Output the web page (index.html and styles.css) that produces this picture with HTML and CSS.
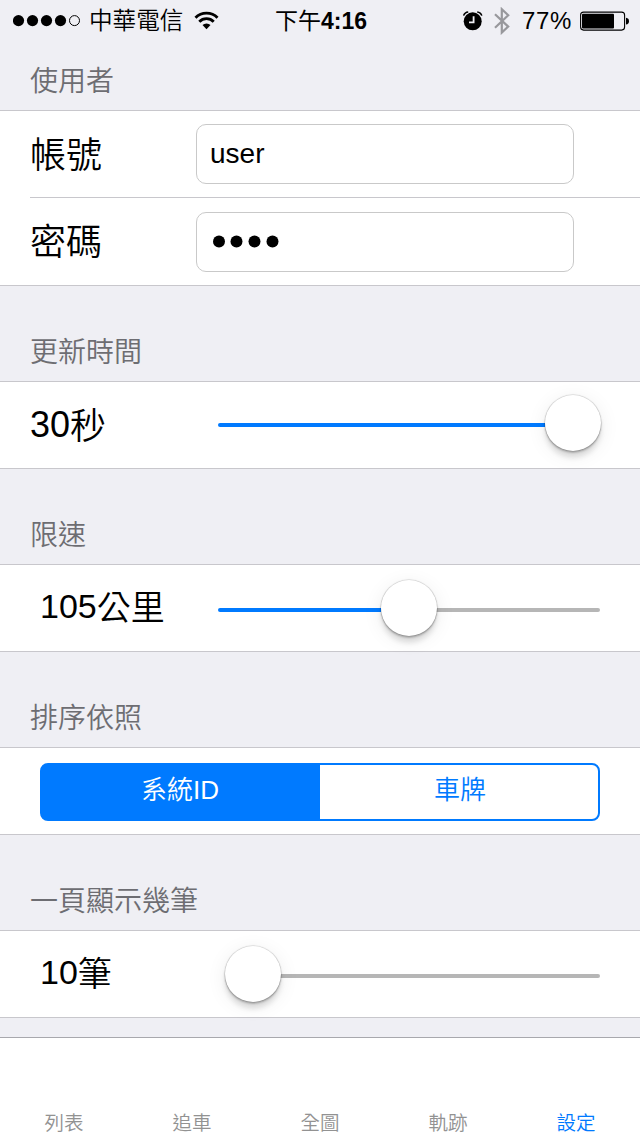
FILE: index.html
```html
<!DOCTYPE html>
<html lang="zh-Hant">
<head>
<meta charset="utf-8">
<title>設定</title>
<link rel="stylesheet" href="styles.css">
</head>
<body>
<div class="screen">
  <header class="status">
    <div class="status-left">
      <svg class="signal" width="68" height="12" viewBox="0 0 68 12"><circle cx="5.5" cy="5.6" r="5.6"/><circle cx="19.5" cy="5.6" r="5.6"/><circle cx="33.5" cy="5.6" r="5.6"/><circle cx="47.5" cy="5.6" r="5.6"/><circle cx="61.5" cy="5.6" r="5" fill="none" stroke="#000"/></svg>
      <span class="carrier">中華電信</span>
      <svg class="wifi" width="25" height="19" viewBox="0 0 26 20"><g fill="none" stroke="#000" stroke-width="3"><path d="M1.4 7.1a16.2 16.2 0 0 1 23.2 0"/><path d="M5.4 11.3a10.6 10.6 0 0 1 15.2 0"/></g><path d="M8.8 14.8a5.9 5.9 0 0 1 8.4 0L13 19.2z"/></svg>
    </div>
    <div class="time">下午<b>4:16</b></div>
    <div class="status-right">
      <svg class="alarm" width="20" height="20" viewBox="0 0 20 20"><circle cx="9.7" cy="10.3" r="9"/><path d="M10.6 5.2v6.2H6" fill="none" stroke="#efeff4" stroke-width="1.8"/><path d="M.6 4.6Q1.6 1.2 5.2 .9M18.8 4.6Q17.8 1.2 14.2 .9" fill="none" stroke="#000" stroke-width="1.5"/></svg>
      <svg class="bluetooth" width="16" height="28" viewBox="0 0 16 28"><path d="M1 7.2l13.2 12.4-6.4 6V2.2l6.4 6L1 20.8" fill="none" stroke="#98989c" stroke-width="2.2"/></svg>
      <span class="percent">77%</span>
      <svg class="battery" width="49" height="20" viewBox="0 0 49 20"><rect x=".6" y="1.1" width="44" height="18" rx="3" fill="none" stroke="#000" stroke-width="1.1"/><rect x="2" y="2.7" width="32" height="14.8" rx="1"/><path d="M46 6.8q3 .5 3 3.4t-3 3.4z"/></svg>
    </div>
  </header>

  <h2 class="heading heading-first">使用者</h2>
  <section class="group">
    <div class="row row-account"><label class="label"><span class="cjk">帳號</span></label><div class="field">user</div></div>
    <div class="row row-password"><label class="label"><span class="cjk">密碼</span></label><div class="field"><svg class="dots" width="70" height="14" viewBox="0 0 70 14"><circle cx="7" cy="6.5" r="6"/><circle cx="24.5" cy="6.5" r="6"/><circle cx="42.5" cy="6.5" r="6"/><circle cx="60.5" cy="6.5" r="6"/></svg></div></div>
  </section>

  <h2 class="heading">更新時間</h2>
  <section class="group">
    <div class="row"><span class="label">30<span class="cjk">秒</span></span>
      <div class="slider"><div class="fill" style="width:327px"></div><div class="knob"></div><div class="rest"></div></div>
    </div>
  </section>

  <h2 class="heading">限速</h2>
  <section class="group">
    <div class="row"><span class="label label-small">105<span class="cjk">公里</span></span>
      <div class="slider slider-low"><div class="fill" style="width:163px"></div><div class="knob"></div><div class="rest"></div></div>
    </div>
  </section>

  <h2 class="heading">排序依照</h2>
  <section class="group">
    <div class="row"><div class="segments"><div class="segment active">系統ID</div><div class="segment">車牌</div></div></div>
  </section>

  <h2 class="heading">一頁顯示幾筆</h2>
  <section class="group">
    <div class="row"><span class="label label-small">10<span class="cjk">筆</span></span>
      <div class="slider slider-low slider-min"><div class="knob"></div><div class="rest"></div></div>
    </div>
  </section>

  <nav class="tabs">
    <span class="tab">列表</span><span class="tab">追車</span><span class="tab">全圖</span><span class="tab">軌跡</span><span class="tab current">設定</span>
  </nav>
</div>
</body>
</html>
```

FILE: styles.css
```css
* { box-sizing: border-box; }

body {
  margin: 0;
  background: #efeff4;
  color: #000;
  font-family: "Liberation Sans", "Noto Sans CJK TC", sans-serif;
  font-weight: 350;
}

svg { display: block; flex: none; }

.screen {
  display: flex;
  flex-direction: column;
  width: 640px;
  height: 1136px;
  overflow: hidden;
}

.status {
  display: grid;
  grid-template-columns: 260px 122px 258px;
  height: 40px;
  line-height: 40px;
  font-size: 24px;
  white-space: nowrap;
}

.status-left, .status-right { display: flex; align-items: center; }
.status-left { padding-left: 13px; }
.carrier { width: 96px; margin: 1px 9px 0 8px; font-size: 23.6px; }
.time { padding: 1px 0 0 15px; font-size: 23px; font-weight: 400; }
.time b { font-weight: 700; }
.status-right { padding-left: 81px; }
.bluetooth { margin-left: 11px; }
.percent { width: 51px; margin: 1px 0 0 12px; letter-spacing: 0.6px; }
.battery { margin-left: 7px; }

.heading {
  height: 95px;
  margin: 0;
  padding: 47px 0 0 30px;
  color: #6d6d72;
  font-size: 28px;
  font-weight: 350;
  line-height: 40px;
}

.heading-first { height: 70px; padding-top: 22px; }

.group {
  background: #fff;
  border-top: 1px solid #c8c7cc;
  border-bottom: 1px solid #c8c7cc;
}

.row { display: flex; height: 86px; padding-left: 30px; }

.label {
  width: 166px;
  padding-top: 18px;
  font-size: 36px;
  line-height: 50px;
  white-space: nowrap;
}

.label-small { padding: 16px 0 0 10px; font-size: 34px; }

.cjk {
  display: inline-block;
  height: 50px;
  margin-bottom: -2px;
  vertical-align: -2px;
}

.field {
  display: flex;
  align-items: center;
  width: 378px;
  height: 60px;
  margin-top: 13px;
  padding-left: 13px;
  border: 1px solid #c9c9c9;
  border-radius: 10px;
  font-size: 28px;
}

.row-password {
  height: 88px;
  margin-left: 30px;
  padding-left: 0;
  border-top: 1px solid #c8c7cc;
}

.row-password .field { margin-top: 14px; }
.dots { margin-left: 2px; }

.slider {
  display: flex;
  align-items: center;
  width: 382px;
  height: 86px;
  margin-left: 22px;
}

.slider-low { padding-top: 4px; }
.slider-min { padding-left: 7px; }

.fill { flex: none; height: 4px; background: #007aff; border-radius: 2px 0 0 2px; }
.rest { flex: 1; height: 4px; background: #b6b6b6; border-radius: 0 2px 2px 0; }

.knob {
  flex: none;
  width: 56px;
  height: 56px;
  margin: 0 -1px 4px 0;
  border-radius: 50%;
  background: #fff;
  box-shadow: 0 0 1px 0.5px rgba(0, 0, 0, 0.2), 0 2px 2px rgba(0, 0, 0, 0.22), 0 7px 5px rgba(0, 0, 0, 0.1), 0 4px 20px rgba(0, 0, 0, 0.08);
  z-index: 1;
}

.segments {
  display: flex;
  width: 560px;
  height: 58px;
  margin: 15px 0 0 10px;
  border: 2px solid #007aff;
  border-radius: 8px;
  background: linear-gradient(90deg, #007aff 50%, #fff 50%);
}

.segment {
  flex: 1;
  padding-left: 1px;
  color: #007aff;
  font-size: 26px;
  line-height: 51px;
  text-align: center;
}

.active { padding: 0 3px 0 0; color: #fff; }

.tabs {
  display: grid;
  grid-template-columns: repeat(5, 128px);
  height: 99px;
  margin-top: 19px;
  padding-top: 69px;
  border-top: 1px solid #a8a8ad;
  background: #fff;
}

.tab { padding-top: 1px; color: #929292; font-size: 19.5px; line-height: 30px; text-align: center; }
.current { color: #007aff; }
```
